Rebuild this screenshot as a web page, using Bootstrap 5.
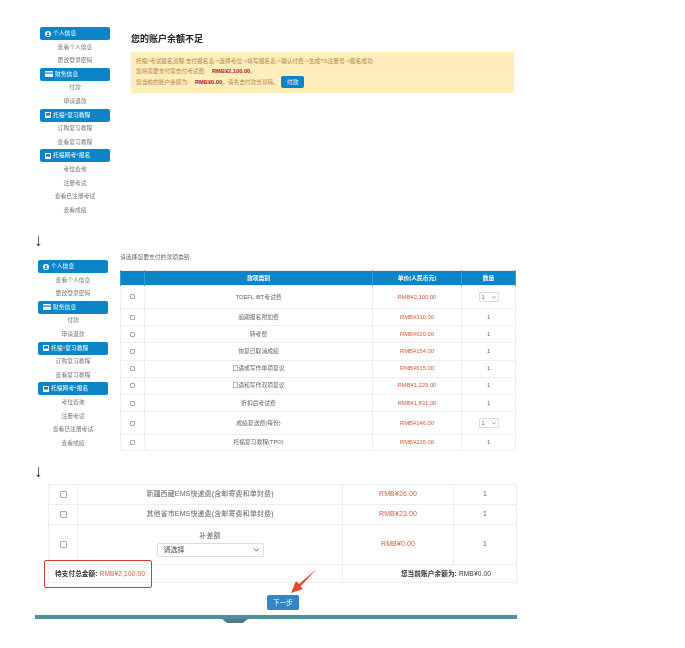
<!DOCTYPE html>
<html lang="zh">
<head>
<meta charset="utf-8">
<title>托福考试报名</title>
<link href="https://cdn.jsdelivr.net/npm/bootstrap@5.3.0/dist/css/bootstrap.min.css" rel="stylesheet">
<style>
body{font-family:"Liberation Sans","Noto Sans CJK SC",sans-serif;background:#fff;color:#555;font-size:6px;line-height:1.2}
.shot{width:685px;height:648px;overflow:hidden;position:relative;filter:blur(.45px)}
.step-a{height:231px;padding:27px 0 0 40px;gap:21px}
.step-b{height:211px;padding:9px 0 0 38px;gap:12px}
.down{font-size:17px;line-height:20px;color:#222;margin-left:34px;height:20px}
.side{width:70px;flex:none}
.side-head{height:13px;border-radius:2px;background:#0b85c8;color:#fff;font-size:5.8px;padding-left:5px;margin-bottom:.6px;gap:2px;white-space:nowrap}
.side-head sup,.note sup{font-size:3.5px;top:-.3em}
.side-link{height:13.6px;line-height:13.6px;text-align:center;color:#777;font-size:5.8px;text-decoration:none}
.main-a{width:383px}
.title-a{font-size:9px;font-weight:700;color:#222;height:25px;line-height:24px;margin:0}
.note{background:#fdeebb;color:#b5854a;height:41px;padding:5px;font-size:5.7px;line-height:9.6px;margin:0;border:0;border-radius:0}
.note b{color:#b0232f;margin-left:3px}
.pay-chip{background:#0b85c8;color:#fff;font-size:5.8px;padding:0;width:23px;height:12px;line-height:12px;border:0;border-radius:2px;margin-left:2px;vertical-align:middle}
.main-b{width:396px;margin-top:-8px}
.prompt{height:18px;line-height:10px;margin:0;font-size:5.8px;color:#666}
.fee{table-layout:fixed;width:100%;margin:0;font-size:5.8px;--bs-table-border-color:#eceef1;--bs-table-color:#666}
.fee td,.fee th{padding:0;vertical-align:middle;text-align:center}
.fee th{background:#0b85c8;color:#fff;font-size:5.8px;height:15px;border-color:#3a9cd3}
.c1{width:24px}.c3{width:89px}.c4{width:54px}
.h17{height:17.2px}.h23{height:23px}.h15{height:15.5px}
.price{color:#d9583c}
.tick{display:inline-block;width:5px;height:5px;border:1px solid #aaa;border-radius:1px;background:#fff;vertical-align:middle}
.mini-pick{display:inline-flex;align-items:center;justify-content:space-between;width:20px;height:10px;border:1px solid #ddd;border-radius:1px;padding:0 2px;font-size:5.5px;background:#fff}
.mini-pick svg{width:4px;height:3px}
.step-c{margin-left:48px;width:469px;margin-top:2px}
.fee-c{font-size:7px;letter-spacing:.12px}
.fee-c .c1{width:29px}.fee-c .c3{width:111px}.fee-c .c4{width:63px}
.r20{height:20px}.r40{height:40px}.r18{height:18px}
.fee-c .tick{width:7px;height:7px}
.fee-c tr:first-child td{border-top:0}
.pick-c{width:107px;height:14px;font-size:7px;padding:0 14px 0 6px;margin:2px auto 0;color:#444;border-color:#ddd;border-radius:2px;background-size:7px 6px;background-position:right 3px center;line-height:12px;min-height:0}
.total{color:#333;font-weight:700;font-size:6.6px;padding-left:6px!important;text-align:left!important}
.total span{font-weight:400}
.balance{color:#333;font-size:6.6px;text-align:right!important;padding-right:25px!important;font-weight:700}
.balance span{font-weight:400}
.next-wrap{height:32px;padding-top:12px;padding-left:219px}
.next{width:32px;height:15px;line-height:15px;padding:0;background:#2f86c9;color:#fff;font-size:6.6px;border:0;border-radius:2px;display:block}
.band{margin-left:35px;width:482px;height:4px;background:#4f8f9f;position:relative}
.band-tab{position:absolute;left:187px;top:4px;width:26px;height:4px;background:#4f7c88;clip-path:polygon(0 0,100% 0,80% 100%,20% 100%)}
.red-box{position:absolute;left:44px;top:560px;width:108px;height:28px;border:1.5px solid #d23c33;border-radius:2px}
.red-arrow{position:absolute;left:286px;top:566px;width:34px;height:30px}
</style>
</head>
<body class="m-0">
<div class="shot">

<section class="step-a d-flex">
  <nav class="side d-flex flex-column">
    <div class="side-head d-flex align-items-center"><svg width="6" height="6" viewBox="0 0 6 6"><circle cx="3" cy="3" r="3" fill="#fff"/><circle cx="3" cy="2.3" r="1" fill="#0b85c8"/><path d="M1.4 5a1.6 1.4 0 0 1 3.2 0z" fill="#0b85c8"/></svg>个人信息</div>
    <a class="side-link">查看个人信息</a><a class="side-link">更改登录密码</a>
    <div class="side-head d-flex align-items-center"><svg width="8" height="6" viewBox="0 0 8 6"><rect width="8" height="6" rx=".7" fill="#fff"/><rect y="1.5" width="8" height="1.2" fill="#0b85c8"/></svg>财务信息</div>
    <a class="side-link">付款</a><a class="side-link">申请退款</a>
    <div class="side-head d-flex align-items-center"><svg width="6" height="6" viewBox="0 0 6 6"><rect width="6" height="6" rx=".6" fill="#fff"/><rect x="1" y="1" width="4" height="2.6" fill="#0b85c8"/></svg><span>托福<sup>®</sup>复习教程</span></div>
    <a class="side-link">订购复习教程</a><a class="side-link">查看复习教程</a>
    <div class="side-head d-flex align-items-center"><svg width="6" height="6" viewBox="0 0 6 6"><rect width="6" height="6" rx=".6" fill="#fff"/><rect x="1" y="1" width="4" height="2.6" fill="#0b85c8"/></svg><span>托福网考<sup>®</sup>报名</span></div>
    <a class="side-link">考位查询</a><a class="side-link">注册考试</a><a class="side-link">查看已注册考试</a><a class="side-link">查看成绩</a>
  </nav>
  <div class="main-a">
    <h1 class="title-a">您的账户余额不足</h1>
    <div class="alert note">
      托福<sup>®</sup>考试报名流程:支付报名表-&gt;选择考位-&gt;填写报名表-&gt;确认付费-&gt;生成TS注册号-&gt;报名成功<br>
      您将需要支付需支付考试费: &nbsp;<b>RMB¥2,100.00</b>。<br>
      您当前的账户余额为: &nbsp;<b>RMB¥0.00</b>。请先去付款长易码。<button type="button" class="btn pay-chip">付款</button>
    </div>
  </div>
</section>

<div class="down">↓</div>

<section class="step-b d-flex">
  <nav class="side d-flex flex-column">
    <div class="side-head d-flex align-items-center"><svg width="6" height="6" viewBox="0 0 6 6"><circle cx="3" cy="3" r="3" fill="#fff"/><circle cx="3" cy="2.3" r="1" fill="#0b85c8"/><path d="M1.4 5a1.6 1.4 0 0 1 3.2 0z" fill="#0b85c8"/></svg>个人信息</div>
    <a class="side-link">查看个人信息</a><a class="side-link">更改登录密码</a>
    <div class="side-head d-flex align-items-center"><svg width="8" height="6" viewBox="0 0 8 6"><rect width="8" height="6" rx=".7" fill="#fff"/><rect y="1.5" width="8" height="1.2" fill="#0b85c8"/></svg>财务信息</div>
    <a class="side-link">付款</a><a class="side-link">申请退款</a>
    <div class="side-head d-flex align-items-center"><svg width="6" height="6" viewBox="0 0 6 6"><rect width="6" height="6" rx=".6" fill="#fff"/><rect x="1" y="1" width="4" height="2.6" fill="#0b85c8"/></svg><span>托福<sup>®</sup>复习教程</span></div>
    <a class="side-link">订购复习教程</a><a class="side-link">查看复习教程</a>
    <div class="side-head d-flex align-items-center"><svg width="6" height="6" viewBox="0 0 6 6"><rect width="6" height="6" rx=".6" fill="#fff"/><rect x="1" y="1" width="4" height="2.6" fill="#0b85c8"/></svg><span>托福网考<sup>®</sup>报名</span></div>
    <a class="side-link">考位查询</a><a class="side-link">注册考试</a><a class="side-link">查看已注册考试</a><a class="side-link">查看成绩</a>
  </nav>
  <div class="main-b">
    <p class="prompt">请选择您要支付的款项类别:</p>
    <table class="table table-bordered fee">
      <colgroup><col class="c1"><col><col class="c3"><col class="c4"></colgroup>
      <thead><tr><th></th><th>款项类别</th><th>单价(人民币元)</th><th>数量</th></tr></thead>
      <tbody>
        <tr class="h23"><td><i class="tick"></i></td><td>TOEFL iBT考试费</td><td class="price">RMB¥2,100.00</td><td><span class="mini-pick">1<svg viewBox="0 0 4 3"><path d="M.5.5 2 2.2 3.5.5" fill="none" stroke="#777" stroke-width=".7"/></svg></span></td></tr>
        <tr class="h17"><td><i class="tick"></i></td><td>逾期报名附加费</td><td class="price">RMB¥310.00</td><td>1</td></tr>
        <tr class="h17"><td><i class="tick"></i></td><td>转考费</td><td class="price">RMB¥620.00</td><td>1</td></tr>
        <tr class="h17"><td><i class="tick"></i></td><td>恢复已取消成绩</td><td class="price">RMB¥154.00</td><td>1</td></tr>
        <tr class="h17"><td><i class="tick"></i></td><td>口语或写作单项复议</td><td class="price">RMB¥615.00</td><td>1</td></tr>
        <tr class="h17"><td><i class="tick"></i></td><td>口语和写作双项复议</td><td class="price">RMB¥1,229.00</td><td>1</td></tr>
        <tr class="h17"><td><i class="tick"></i></td><td>折扣后考试费</td><td class="price">RMB¥1,831.00</td><td>1</td></tr>
        <tr class="h23"><td><i class="tick"></i></td><td>成绩复送费(每份)</td><td class="price">RMB¥146.00</td><td><span class="mini-pick">1<svg viewBox="0 0 4 3"><path d="M.5.5 2 2.2 3.5.5" fill="none" stroke="#777" stroke-width=".7"/></svg></span></td></tr>
        <tr class="h15"><td><i class="tick"></i></td><td>托福复习教程(TPO)</td><td class="price">RMB¥226.00</td><td>1</td></tr>
      </tbody>
    </table>
  </div>
</section>

<div class="down">↓</div>

<section class="step-c">
  <table class="table table-bordered fee fee-c">
    <colgroup><col class="c1"><col><col class="c3"><col class="c4"></colgroup>
    <tbody>
      <tr class="r20"><td><i class="tick"></i></td><td>新疆西藏EMS快递费(含邮寄费和单封费)</td><td class="price">RMB¥26.00</td><td>1</td></tr>
      <tr class="r20"><td><i class="tick"></i></td><td>其他省市EMS快递费(含邮寄费和单封费)</td><td class="price">RMB¥23.00</td><td>1</td></tr>
      <tr class="r40"><td><i class="tick"></i></td><td>补差额<select class="form-select pick-c"><option>请选择</option></select></td><td class="price">RMB¥0.00</td><td>1</td></tr>
      <tr class="r18"><td colspan="2" class="total">待支付总金额: <span class="price">RMB¥2,100.00</span></td><td colspan="2" class="balance">您当前账户余额为: <span>RMB¥0.00</span></td></tr>
    </tbody>
  </table>
  <div class="next-wrap"><button type="button" class="btn next">下一步</button></div>
</section>
<div class="band"><div class="band-tab"></div></div>

<div class="red-box"></div>
<svg class="red-arrow" viewBox="0 0 34 30"><path d="M30.5 3 13 18l-3-3-5 12 12-4-2.500-2.500z" fill="#e5492c"/></svg>
</div>
</body>
</html>
